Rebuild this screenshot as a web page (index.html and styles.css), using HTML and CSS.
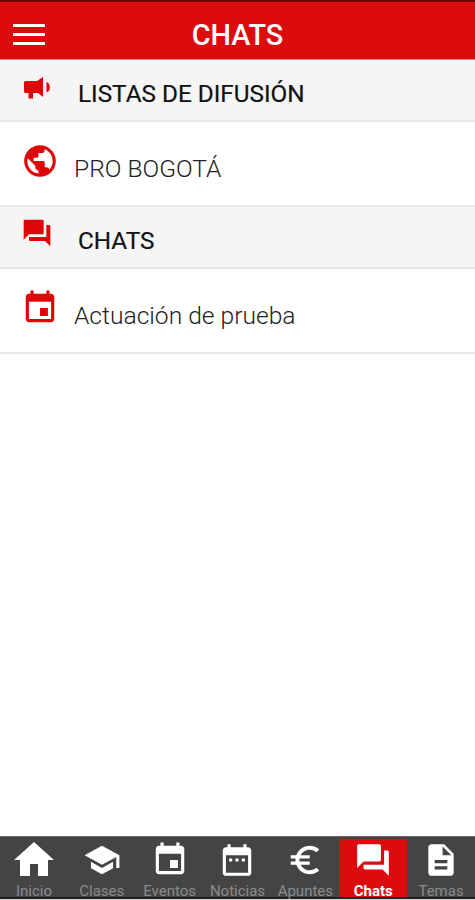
FILE: index.html
```
<!DOCTYPE html>
<html lang="es">
<head>
  <meta charset="UTF-8" />
  <meta name="viewport" content="width=device-width, initial-scale=1" />
  <title>Chats</title>
  <link rel="stylesheet" href="styles.css">
</head>
<body>

  <!-- ICONOS -->
  <svg class="sprite">
    <symbol id="forum" viewBox="0 0 24 24"><path d="M21 6h-2v9H6v2c0 .55.45 1 1 1h11l4 4V7c0-.55-.45-1-1-1zm-4 6V3c0-.55-.45-1-1-1H3c-.55 0-1 .45-1 1v14l4-4h10c.55 0 1-.45 1-1z"/></symbol>
    <symbol id="event" viewBox="0 0 24 24"><path d="M17 12h-5v5h5v-5zM16 1v2H8V1H6v2H5c-1.11 0-1.99.9-1.99 2L3 19c0 1.1.89 2 2 2h14c1.1 0 2-.9 2-2V5c0-1.1-.9-2-2-2h-1V1h-2zm3 18H5V8h14v11z"/></symbol>
  </svg>

  <header class="header">
    <button class="menu" aria-label="Menú"><span></span><span></span><span></span></button>
    <h1>CHATS</h1>
  </header>

  <main class="content">
    <div class="section">
      <svg class="icon icon-horn" viewBox="0 0 26 22"><path d="M1.500 4H13l6-4v20l-5-4H9v5.500H4.500V16h-3A1.500 1.500 0 0 1 0 14.500v-9A1.500 1.500 0 0 1 1.500 4zM22.500 5c4.500 1.500 4.500 9 0 10.500z"/></svg>
      <h2>LISTAS DE DIFUSIÓN</h2>
    </div>
    <div class="item">
      <svg class="icon" viewBox="0 0 24 24"><path d="M12 2C6.480 2 2 6.480 2 12s4.480 10 10 10 10-4.480 10-10S17.520 2 12 2zm-1 17.930c-3.950-.49-7-3.850-7-7.930 0-.62.080-1.210.210-1.790L9 15v1c0 1.100.9 2 2 2v1.930zm6.900-2.540c-.26-.81-1-1.390-1.900-1.390h-1v-3c0-.55-.45-1-1-1H8v-2h2c.55 0 1-.45 1-1V7h2c1.100 0 2-.9 2-2v-.41c2.930 1.190 5 4.060 5 7.410 0 2.080-.8 3.970-2.100 5.390z"/></svg>
      <p>PRO BOGOTÁ</p>
    </div>
    <div class="section">
      <svg class="icon"><use href="#forum"/></svg>
      <h2>CHATS</h2>
    </div>
    <div class="item">
      <svg class="icon"><use href="#event"/></svg>
      <p>Actuación de prueba</p>
    </div>
  </main>

  <!-- MENU INFERIOR -->
  <nav class="tabs">
    <a class="tab">
      <svg class="home" viewBox="0 0 24 24"><path d="M10 20v-6h4v6h5v-8h3L12 3 2 12h3v8z"/></svg>
      <span>Inicio</span>
    </a>
    <a class="tab">
      <svg viewBox="0 0 24 24"><path d="M5 13.180v4L12 21l7-3.820v-4L12 17l-7-3.820zM12 3L1 9l11 6 9-4.910V17h2V9L12 3z"/></svg>
      <span>Clases</span>
    </a>
    <a class="tab">
      <svg><use href="#event"/></svg>
      <span>Eventos</span>
    </a>
    <a class="tab">
      <svg viewBox="0 0 24 24"><path d="M9 11H7v2h2v-2zm4 0h-2v2h2v-2zm4 0h-2v2h2v-2zm2-7h-1V2h-2v2H8V2H6v2H5c-1.110 0-1.990.9-1.990 2L3 20c0 1.100.89 2 2 2h14c1.100 0 2-.9 2-2V6c0-1.100-.9-2-2-2zm0 16H5V9h14v11z"/></svg>
      <span>Noticias</span>
    </a>
    <a class="tab">
      <svg viewBox="0 0 24 24"><path d="M15 18.500c-2.510 0-4.680-1.420-5.760-3.500H15v-2H8.580c-.05-.33-.08-.66-.08-1s.03-.67.080-1H15V9H9.240C10.320 6.920 12.500 5.500 15 5.500c1.610 0 3.090.59 4.230 1.570L21 5.300C19.410 3.870 17.300 3 15 3c-3.920 0-7.240 2.510-8.480 6H3v2h3.060c-.04.33-.06.66-.06 1s.02.67.060 1H3v2h3.520c1.240 3.490 4.560 6 8.480 6 2.310 0 4.410-.87 6-2.300l-1.780-1.770c-1.130.98-2.600 1.570-4.220 1.570z"/></svg>
      <span>Apuntes</span>
    </a>
    <a class="tab active">
      <svg><use href="#forum"/></svg>
      <span>Chats</span>
    </a>
    <a class="tab">
      <svg viewBox="0 0 24 24"><path d="M14 2H6c-1.100 0-1.990.9-1.990 2L4 20c0 1.100.89 2 1.990 2H18c1.100 0 2-.9 2-2V8l-6-6zm2 16H8v-2h8v2zm0-4H8v-2h8v2zm-3-5V3.500L18.500 9H13z"/></svg>
      <span>Temas</span>
    </a>
  </nav>

</body>
</html>
```
FILE: styles.css
```
* {
  box-sizing: border-box;
}
body {
  margin: 0;
  height: 100vh;
  display: flex;
  flex-direction: column;
  font-family: Roboto, sans-serif;
  background: #fff;
  border-bottom: 1px solid #d5d5d5;
  overflow: hidden;
}
h1, h2, p {
  margin: 0;
}
.sprite {
  display: none;
}
.header {
  height: 60px;
  display: grid;
  grid-template-columns: 57px 1fr 57px;
  align-items: center;
  padding-top: 7px;
  background: #dc0b0d;
  border-top: 2px solid #6b0205;
  border-bottom: 1px solid #ec7f80;
  color: #fff;
}
.header h1 {
  padding-top: 1px;
  font-size: 28.8px;
  line-height: 32px;
  font-weight: 500;
  text-align: center;
}
.menu {
  width: 32px;
  margin-left: 13px;
  padding: 0;
  display: flex;
  flex-direction: column;
  gap: 6px;
  background: none;
  border: none;
}
.menu span {
  width: 100%;
  height: 3px;
  background: #fff;
}
.content {
  flex: 1;
}
.section, .item {
  display: flex;
  align-items: flex-start;
  border-bottom: 2px solid #e7e7e7;
}
.section {
  height: 62px;
  padding: 10px 0 0 21px;
  background: #f5f5f5;
}
.item {
  height: 85px;
  padding: 20px 0 0 21px;
}
.icon {
  width: 38px;
  height: 38px;
  fill: #df0609;
}
.section .icon {
  width: 32px;
  height: 32px;
}
.section .icon-horn {
  width: 26px;
  height: 22px;
  margin: 7px 3px 0;
}
.section h2 {
  margin: 10px 0 0 25px;
  font-size: 24.3px;
  line-height: 28px;
  font-weight: 400;
  color: #111;
  -webkit-text-stroke: 0.2px #111;
}
.item p {
  margin: 12px 0 0 15px;
  font-size: 24.6px;
  line-height: 30px;
  font-weight: 300;
  color: #222;
}
.tabs {
  height: 63px;
  flex-shrink: 0;
  display: grid;
  grid-template-columns: repeat(7, 1fr);
  background: #444;
  border-top: 1px solid #666;
  border-bottom: 2px solid #222;
}
.tab {
  height: 60px;
  display: flex;
  flex-direction: column;
  align-items: center;
  padding-top: 4px;
  color: #8b8b8b;
  font-size: 15px;
  line-height: 15px;
}
.tab svg {
  flex-shrink: 0;
  width: 38px;
  height: 38px;
  margin-bottom: 5px;
  fill: #fff;
}
.tab .home {
  width: 48px;
  height: 48px;
  margin: -5px 0 0;
}
.tab.active {
  height: 58px;
  margin-top: 2px;
  padding-top: 2px;
  background: #dc0b0d;
  color: #fff;
  font-weight: 700;
}
```
